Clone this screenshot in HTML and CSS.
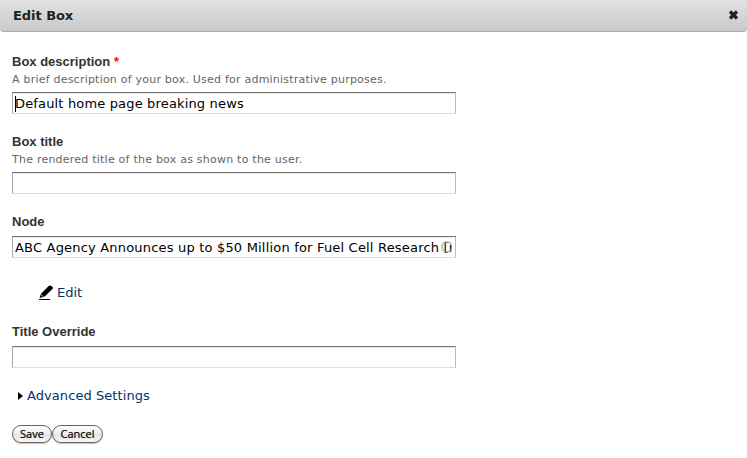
FILE: index.html
```
<!DOCTYPE html>
<html lang="en">
<head>
<meta charset="utf-8">
<title>Edit Box</title>
<link rel="stylesheet" href="styles.css">
</head>
<body>
<div class="dialog">
  <header class="titlebar">
    <h1><span>Edit Box</span></h1>
    <a class="close" aria-label="Close"><svg width="11" height="10" viewBox="0 0 11 10"><path d="M2 1.5 9 8.5M9 1.5 2 8.5" stroke="#222" stroke-width="3.2"/></svg></a>
  </header>
  <form class="form">
    <div class="item">
      <label><span class="l1">Box description</span> <span class="required">*</span></label>
      <p class="description"><span class="d1">A brief description of your box. Used for administrative purposes.</span></p>
      <div class="field"><i class="caret"></i><span class="v1">Default home page breaking news</span></div>
    </div>
    <div class="item">
      <label><span>Box title</span></label>
      <p class="description"><span class="d2">The rendered title of the box as shown to the user.</span></p>
      <div class="field"></div>
    </div>
    <div class="item node">
      <label><span>Node</span></label>
      <div class="field"><span class="v2">ABC Agency Announces up to $50 Million for Fuel Cell Research [n</span><i class="throbber"></i></div>
    </div>
    <a class="edit"><svg width="15" height="16" viewBox="0 0 15 16"><path d="M.5 13 2 8.8 9.7 1.1Q10.8 0 12 .7L13.6 2Q14.4 3 13.5 4L5.4 11.8Z" fill="#000"/><path d="M1.8 9.4 4.8 12.2" stroke="#fff" stroke-width=".7"/><path d="M0 14h11v1H0z"/></svg><span>Edit</span></a>
    <div class="item override">
      <label><span>Title Override</span></label>
      <div class="field"></div>
    </div>
    <a class="advanced"><svg width="5" height="8" viewBox="0 0 5 8"><path d="M0 0 5 4 0 8Z"/></svg><span>Advanced Settings</span></a>
    <div class="actions"><button type="button" class="save"><span>Save</span></button><button type="button" class="cancel"><span>Cancel</span></button></div>
  </form>
</div>
</body>
</html>
```
FILE: styles.css
```
* { box-sizing: border-box; }
body { margin: 0; background: #fff; color: #333; font: 13px/18px "DejaVu Sans", Verdana, sans-serif; }
.dialog { height: 458px; overflow: hidden; }
.titlebar { height: 32px; display: flex; align-items: center; justify-content: space-between; padding: 0 8px 1px 13px; background: linear-gradient(#e2e2e2, #c9c9c9); border-bottom: 1px solid #aaa; border-radius: 0 0 4px 4px; }
h1 { margin: 0; padding-top: 1px; font-size: 13px; line-height: 18px; color: #222; letter-spacing: -.05px; }
.close { display: flex; }
.form { padding: 21px 12px 0; display: flex; flex-direction: column; align-items: flex-start; }
.item { width: 444px; margin-bottom: 19px; }
label { display: block; height: 18px; font: bold 13px/18px "Liberation Sans", Arial, sans-serif; white-space: nowrap; }
.required { color: #f00; }
.description { margin: 0; height: 21px; font-size: 11px; line-height: 18px; color: #666; white-space: nowrap; }
.d1 { letter-spacing: .22px; }
.d2 { letter-spacing: .23px; }
.v1 { letter-spacing: .16px; }
.v2 { letter-spacing: .19px; }
.field { position: relative; height: 22px; padding: 0 2px; border: 1px solid #bbb; border-top-color: #777; border-left-color: #aaa; border-bottom-color: #ddd; box-shadow: inset 0 1px #e6e6e6; line-height: 22px; color: #000; white-space: nowrap; overflow: hidden; background: #fff; }
.caret { position: absolute; left: 2px; top: 3px; width: 1px; height: 16px; background: #000; }
.throbber { position: absolute; right: 3px; top: 4px; width: 12px; height: 12px; border: 2px solid rgba(150, 160, 175, .65); border-radius: 50%; }
.node .field, .override .field { margin-top: 5px; }
.node .field { border-right: 0; padding-right: 0; }
.node .field::after { content: ""; position: absolute; right: 0; top: 0; width: 3px; height: 20px; background: #fff; border-right: 1px solid #bbb; }
.node { margin-bottom: 26px; }
.edit { display: flex; align-items: center; gap: 3px; margin-left: 27px; height: 18px; color: #036; }
.edit svg { margin-top: -1px; }
.override { margin: 21px 0 19px; }
.advanced { display: flex; align-items: center; gap: 4px; margin-left: 6px; height: 18px; color: #036; letter-spacing: .07px; }
.actions { display: flex; margin-top: 20px; }
button { height: 18px; padding: 0; border: 1px solid #666; border-radius: 9px; background: linear-gradient(#fff, #eee 48%, #e3e3e3 52%, #f8f8f8); box-shadow: 0 1px 1px rgba(0, 0, 0, .25); font: 11px/16px "Open Sans", "Lucida Grande", sans-serif; color: #000; -webkit-text-stroke: .2px #000; }
.save { width: 40px; }
.cancel { width: 51px; }
```
